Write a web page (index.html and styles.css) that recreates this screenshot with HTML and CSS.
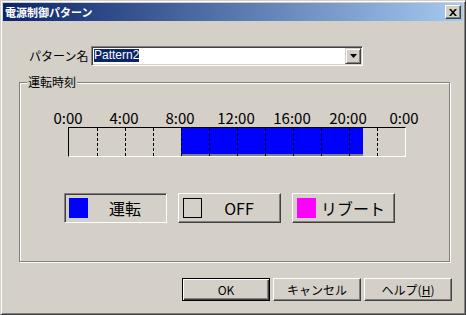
FILE: index.html
```html
<!DOCTYPE html>
<html lang="ja">
<head>
<meta charset="utf-8">
<title>電源制御パターン</title>
<link rel="stylesheet" href="styles.css">
</head>
<body>
<div class="window">
  <div class="titlebar">
    <span class="title">電源制御パターン</span>
    <div class="close-btn">
      <svg width="8" height="7" viewBox="0 0 8 7"><path d="M0 0h2l2 2.2L6 0h2L5 3.5 8 7H6L4 4.8 2 7H0l3-3.5z" fill="#000"/></svg>
    </div>
  </div>
  <div class="content">
    <div class="name-row">
      <span class="name-label">パターン名</span>
      <div class="combo">
        <div class="combo-text"><span class="combo-sel">Pattern2</span></div>
        <div class="combo-btn">
          <svg width="7" height="4" viewBox="0 0 7 4"><path d="M0 0h7L3.5 4z" fill="#000"/></svg>
        </div>
      </div>
    </div>
    <div class="group">
      <span class="group-label">運転時刻</span>
      <div class="ticks">
        <span class="tick">0:00</span>
        <span class="tick">4:00</span>
        <span class="tick">8:00</span>
        <span class="tick">12:00</span>
        <span class="tick">16:00</span>
        <span class="tick">20:00</span>
        <span class="tick">0:00</span>
      </div>
      <div class="bar">
        <svg width="336" height="28" viewBox="0 0 336 28">
          <rect x="112" y="0" width="182" height="26" fill="#0000ff"/>
          <rect x="112" y="26" width="182" height="2" fill="#808080"/>
          <g stroke="#000" stroke-width="1" stroke-dasharray="3 2">
            <line x1="28.5" y1="0" x2="28.5" y2="28"/>
            <line x1="56.5" y1="0" x2="56.5" y2="28"/>
            <line x1="84.5" y1="0" x2="84.5" y2="28"/>
            <line x1="112.5" y1="0" x2="112.5" y2="28"/>
            <line x1="140.5" y1="0" x2="140.5" y2="28"/>
            <line x1="168.5" y1="0" x2="168.5" y2="28"/>
            <line x1="196.5" y1="0" x2="196.5" y2="28"/>
            <line x1="224.5" y1="0" x2="224.5" y2="28"/>
            <line x1="252.5" y1="0" x2="252.5" y2="28"/>
            <line x1="280.5" y1="0" x2="280.5" y2="28"/>
            <line x1="308.5" y1="0" x2="308.5" y2="28"/>
          </g>
        </svg>
      </div>
      <div class="legend">
        <div class="legend-btn legend-btn--on">
          <span class="swatch swatch--run"></span>
          <span class="legend-label">運転</span>
        </div>
        <div class="legend-btn">
          <span class="swatch swatch--off"></span>
          <span class="legend-label">OFF</span>
        </div>
        <div class="legend-btn">
          <span class="swatch swatch--reboot"></span>
          <span class="legend-label">リブート</span>
        </div>
      </div>
    </div>
    <div class="buttons">
      <div class="btn btn--default">OK</div>
      <div class="btn">キャンセル</div>
      <div class="btn">ヘルプ(<u>H</u>)</div>
    </div>
  </div>
</div>
</body>
</html>
```

FILE: styles.css
```css
html, body {
  margin: 0;
  padding: 0;
}
body {
  width: 466px;
  height: 315px;
  overflow: hidden;
  background: #d4d0c8;
  font-family: "Noto Sans CJK JP", sans-serif;
  color: #000;
}
.window {
  width: 466px;
  height: 315px;
  box-sizing: border-box;
  border: 1px solid;
  border-color: #d4d0c8 #404040 #404040 #d4d0c8;
  box-shadow: inset 1px 1px #fff, inset -1px -1px #808080;
  padding: 2px;
  background: #d4d0c8;
}
.titlebar {
  height: 18px;
  display: flex;
  align-items: center;
  padding-left: 2px;
  background: linear-gradient(to right, #0a246a, #a6caf0);
}
.title {
  color: #fff;
  font: bold 11px/18px "Noto Sans CJK JP", sans-serif;
}
.close-btn {
  margin-left: auto;
  margin-right: 2px;
  width: 16px;
  height: 14px;
  box-sizing: border-box;
  background: #d4d0c8;
  border: 1px solid;
  border-color: #fff #404040 #404040 #fff;
  box-shadow: inset -1px -1px #808080;
  display: flex;
  align-items: center;
  justify-content: center;
}
.close-btn svg {
  display: block;
}
.content {
  padding-top: 25px;
}
.name-row {
  display: flex;
  align-items: center;
  height: 20px;
  padding-left: 26px;
}
.name-label {
  width: 62px;
  font: 12px/14px "Noto Sans CJK JP", sans-serif;
}
.combo {
  width: 272px;
  height: 20px;
  box-sizing: border-box;
  border: 1px solid;
  border-color: #808080 #fff #fff #808080;
  box-shadow: inset 1px 1px #404040, inset -1px -1px #d4d0c8;
  padding: 1px;
  background: #fff;
  display: flex;
}
.combo-text {
  flex: 1;
  padding: 1px 0 0 1px;
}
.combo-sel {
  display: inline-block;
  vertical-align: top;
  background: #0a246a;
  color: #fff;
  font: 12px/13px "Liberation Sans", sans-serif;
}
.combo-btn {
  width: 16px;
  height: 16px;
  box-sizing: border-box;
  background: #d4d0c8;
  border: 1px solid;
  border-color: #d4d0c8 #404040 #404040 #d4d0c8;
  box-shadow: inset 1px 1px #fff, inset -1px -1px #808080;
  display: flex;
  align-items: center;
  justify-content: center;
}
.combo-btn svg {
  display: block;
}
.group {
  position: relative;
  margin: 16px 0 0 16px;
  width: 431px;
  height: 180px;
  box-sizing: border-box;
  border: 1px solid #808080;
  box-shadow: inset 1px 1px #fff, 1px 1px #fff;
  padding: 26px 0 0 20px;
}
.group-label {
  position: absolute;
  left: 7px;
  top: -8px;
  padding: 0 1px;
  background: #d4d0c8;
  font: 12px/14px "Noto Sans CJK JP", sans-serif;
}
.ticks {
  display: flex;
  height: 18px;
}
.tick {
  width: 56px;
  text-align: center;
  font: 15px/18px "Noto Sans CJK JP", sans-serif;
}
.bar {
  margin-left: 28px;
  width: 338px;
  height: 30px;
  box-sizing: border-box;
  border: 1px solid;
  border-color: #000 #fff #fff #000;
}
.bar svg {
  display: block;
}
.legend {
  display: flex;
  gap: 11px;
  margin: 36px 0 0 24px;
}
.legend-btn {
  width: 103px;
  height: 30px;
  box-sizing: border-box;
  display: flex;
  align-items: center;
  padding: 0 4px;
  border: 1px solid;
  border-color: #fff #404040 #404040 #fff;
  box-shadow: inset -1px -1px #808080;
}
.legend-btn--on {
  border-color: #808080 #fff #fff #808080;
  box-shadow: inset 1px 1px #404040;
}
.swatch {
  width: 19px;
  height: 20px;
  box-sizing: border-box;
  flex: none;
}
.swatch--run {
  background: #0000ff;
}
.swatch--off {
  border: 1px solid #000;
}
.swatch--reboot {
  background: #ff00ff;
}
.legend-label {
  flex: 1;
  text-align: center;
  font: 16px/20px "Noto Sans CJK JP", sans-serif;
}
.buttons {
  display: flex;
  justify-content: flex-end;
  gap: 3px;
  margin-top: 16px;
  padding-right: 11px;
}
.btn {
  width: 88px;
  height: 23px;
  box-sizing: border-box;
  display: flex;
  align-items: center;
  justify-content: center;
  border: 1px solid;
  border-color: #fff #404040 #404040 #fff;
  box-shadow: inset -1px -1px #808080;
  font: 12px/14px "Noto Sans CJK JP", sans-serif;
}
.btn--default {
  border-color: #000;
  box-shadow: inset 1px 1px #fff, inset -1px -1px #404040, inset -2px -2px #808080;
}
```
